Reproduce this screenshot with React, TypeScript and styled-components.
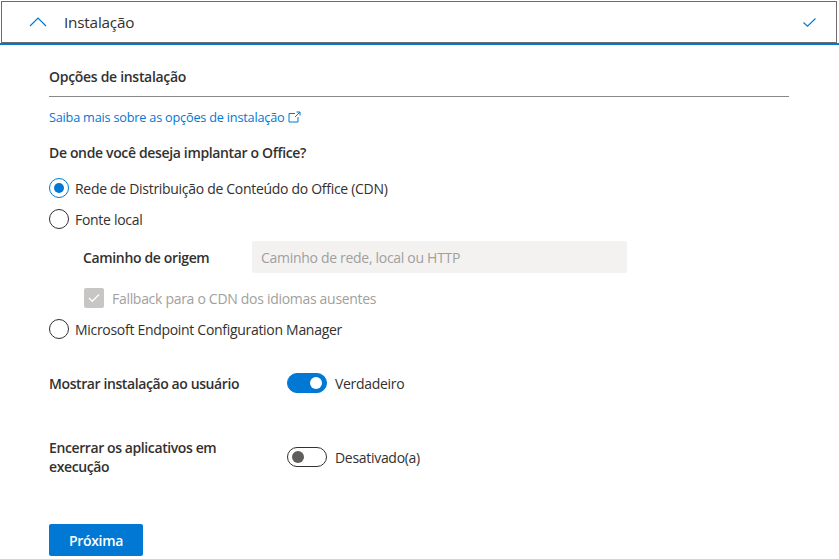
import React from "react";
import styled, { createGlobalStyle } from "styled-components";

const Global = createGlobalStyle`
  html, body { margin: 0; padding: 0; background: #fff; }
  body { font-family: "Segoe UI", "Open Sans", "Noto Sans", sans-serif; color: #323130; }
  * { box-sizing: border-box; }
`;

const Page = styled.div`
  width: 839px;
  height: 559px;
  overflow: hidden;
  padding-top: 1px;
`;

const Header = styled.div`
  height: 42px;
  margin: 0 2px 0 1px;
  border: 1px solid #6b6b6b;
  display: flex;
  align-items: center;
  padding: 0 20px 0 27px;
`;

const HeaderTitle = styled.div`
  font-size: 15.3px;
  color: #323130;
  margin-left: 17px;
  flex: 1;
  letter-spacing: -0.2px;
`;

const BlueBar = styled.div`
  height: 2px;
  background: #0078d4;
`;

const Content = styled.div`
  padding: 0 50px 0 49px;
  display: flex;
  flex-direction: column;
`;

const SectionTitle = styled.div`
  font-size: 14px;
  font-weight: 600;
  line-height: 20px;
  margin-top: 22px;
  padding-bottom: 9px;
  border-bottom: 1px solid #8a8886;
  letter-spacing: -0.3px;
`;

const Link = styled.a`
  font-size: 12.7px;
  line-height: 18px;
  color: #0078d4;
  margin-top: 11px;
  display: flex;
  align-items: center;
  gap: 4px;
  text-decoration: none;
  letter-spacing: -0.2px;
`;

const Question = styled.div`
  font-size: 14px;
  font-weight: 600;
  line-height: 20px;
  margin-top: 17px;
  letter-spacing: -0.35px;
`;

const RadioRow = styled.label<{ $mt: number }>`
  display: flex;
  align-items: center;
  gap: 6px;
  height: 20px;
  margin-top: ${(p) => p.$mt}px;
  font-size: 14px;
  letter-spacing: -0.3px;
`;

const RadioCircle = styled.span<{ $checked?: boolean }>`
  width: 20px;
  height: 20px;
  border-radius: 50%;
  border: 1px solid ${(p) => (p.$checked ? "#0078d4" : "#323130")};
  display: flex;
  align-items: center;
  justify-content: center;
  flex-shrink: 0;
  &::after {
    content: "";
    width: 10px;
    height: 10px;
    border-radius: 50%;
    background: ${(p) => (p.$checked ? "#0078d4" : "transparent")};
  }
`;

const PathRow = styled.div`
  display: flex;
  align-items: center;
  margin-top: 12px;
  padding-left: 34px;
`;

const PathLabel = styled.div`
  font-size: 14px;
  font-weight: 600;
  width: 169px;
  letter-spacing: -0.35px;
`;

const PathInput = styled.div`
  width: 375px;
  height: 32px;
  background: #f3f2f1;
  border-radius: 2px;
  display: flex;
  align-items: center;
  padding-left: 9px;
  font-size: 14px;
  color: #a19f9d;
  letter-spacing: -0.3px;
`;

const CheckRow = styled.div`
  display: flex;
  align-items: center;
  gap: 8px;
  margin-top: 15px;
  padding-left: 35px;
  font-size: 14px;
  color: #a19f9d;
  height: 20px;
  letter-spacing: -0.3px;
`;

const CheckBox = styled.span`
  width: 20px;
  height: 20px;
  border-radius: 2px;
  background: #c8c6c4;
  display: flex;
  align-items: center;
  justify-content: center;
`;

const ToggleRow = styled.div<{ $mt: number }>`
  display: flex;
  align-items: center;
  margin-top: ${(p) => p.$mt}px;
`;

const ToggleLabel = styled.div`
  width: 238px;
  padding-right: 40px;
  font-size: 14px;
  font-weight: 600;
  line-height: 19px;
  letter-spacing: -0.4px;
`;

const Toggle = styled.span<{ $on?: boolean }>`
  width: 40px;
  height: 20px;
  border-radius: 10px;
  border: 1px solid ${(p) => (p.$on ? "#0078d4" : "#323130")};
  background: ${(p) => (p.$on ? "#0078d4" : "#fff")};
  display: flex;
  align-items: center;
  justify-content: ${(p) => (p.$on ? "flex-end" : "flex-start")};
  padding: 0 4px;
  flex-shrink: 0;
  &::after {
    content: "";
    width: 12px;
    height: 12px;
    border-radius: 50%;
    background: ${(p) => (p.$on ? "#fff" : "#605e5c")};
  }
`;

const ToggleText = styled.span`
  font-size: 14px;
  margin-left: 8px;
  letter-spacing: -0.3px;
`;

const Button = styled.button`
  margin-top: 48px;
  align-self: flex-start;
  width: 94px;
  height: 32px;
  border: none;
  border-radius: 2px;
  background: #0078d4;
  color: #fff;
  font-family: inherit;
  font-size: 14px;
  font-weight: 600;
  letter-spacing: -0.3px;
`;

export default function App() {
  return (
    <Page>
      <Global />
      <Header>
        <svg width="18" height="10" viewBox="0 0 18 10">
          <path d="M1 9 L9 1 L17 9" fill="none" stroke="#0078d4" strokeWidth="1.2" />
        </svg>
        <HeaderTitle>Instalação</HeaderTitle>
        <svg width="13" height="9" viewBox="0 0 13 9">
          <path d="M0.5 4.5 L4.5 8.2 L12.5 0.5" fill="none" stroke="#0078d4" strokeWidth="1.1" />
        </svg>
      </Header>
      <BlueBar />
      <Content>
        <SectionTitle>Opções de instalação</SectionTitle>
        <Link href="#">
          Saiba mais sobre as opções de instalação
          <svg width="13" height="12" viewBox="0 0 13 12">
            <path d="M7 2.5 H1 V11 H10 V6" fill="none" stroke="#0078d4" strokeWidth="1" />
            <path d="M7 6 L12 1 M8.5 1 H12 V4.5" fill="none" stroke="#0078d4" strokeWidth="1" />
          </svg>
        </Link>
        <Question>De onde você deseja implantar o Office?</Question>
        <RadioRow $mt={15}>
          <RadioCircle $checked />
          Rede de Distribuição de Conteúdo do Office (CDN)
        </RadioRow>
        <RadioRow $mt={11}>
          <RadioCircle />
          Fonte local
        </RadioRow>
        <PathRow>
          <PathLabel>Caminho de origem</PathLabel>
          <PathInput>Caminho de rede, local ou HTTP</PathInput>
        </PathRow>
        <CheckRow>
          <CheckBox>
            <svg width="12" height="10" viewBox="0 0 12 10">
              <path d="M1 5 L4.3 8.3 L11 1.5" fill="none" stroke="#fff" strokeWidth="1.3" />
            </svg>
          </CheckBox>
          Fallback para o CDN dos idiomas ausentes
        </CheckRow>
        <RadioRow $mt={11}>
          <RadioCircle />
          Microsoft Endpoint Configuration Manager
        </RadioRow>
        <ToggleRow $mt={34}>
          <ToggleLabel>Mostrar instalação ao usuário</ToggleLabel>
          <Toggle $on />
          <ToggleText>Verdadeiro</ToggleText>
        </ToggleRow>
        <ToggleRow $mt={45}>
          <ToggleLabel>Encerrar os aplicativos em execução</ToggleLabel>
          <Toggle />
          <ToggleText>Desativado(a)</ToggleText>
        </ToggleRow>
        <Button>Próxima</Button>
      </Content>
    </Page>
  );
}
